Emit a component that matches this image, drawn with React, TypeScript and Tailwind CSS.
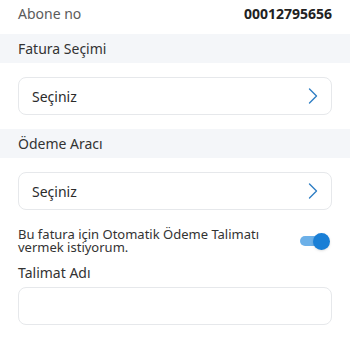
import { ChevronRight } from "lucide-react";

const SelectCard = ({ label }: { label: string }) => (
  <div className="px-[18px] py-[14px]">
    <div className="flex items-center justify-between h-[38px] pl-[13px] pr-[4px] rounded-[8px] border border-[#e6e8eb] bg-white">
      <span className="text-[14px] text-[#2b2b2b]">{label}</span>
      <ChevronRight className="w-[28px] h-[28px] text-[#2f7fc4]" strokeWidth={1.2} />
    </div>
  </div>
);

const SectionTitle = ({ title }: { title: string }) => (
  <div className="h-[29px] flex items-center px-[18px] bg-[#f4f6f9]">
    <span className="text-[14px] text-[#333]">{title}</span>
  </div>
);

export default function App() {
  return (
    <div className="w-[350px] h-[350px] bg-white overflow-hidden" style={{ fontFamily: '"Noto Sans", sans-serif' }}>
      <div className="h-[34px] flex items-center justify-between px-[18px] pb-[8px]">
        <span className="text-[14px] text-[#5b5b5b]">Abone no</span>
        <span className="text-[14px] font-bold text-[#222]">00012795656</span>
      </div>

      <SectionTitle title="Fatura Seçimi" />
      <SelectCard label="Seçiniz" />

      <SectionTitle title="Ödeme Aracı" />
      <SelectCard label="Seçiniz" />

      <div className="flex items-center justify-between px-[18px] pt-[4px]">
        <p className="text-[13px] leading-[13px] text-[#333] w-[260px]">
          Bu fatura için Otomatik Ödeme Talimatı vermek istiyorum.
        </p>
        <div className="relative w-[30px] h-[17px] mr-[2px] flex items-center">
          <div className="w-[28px] h-[10px] rounded-full bg-[#6cb0e8]" />
          <div className="absolute right-0 top-0 w-[17px] h-[17px] rounded-full bg-[#1a7fd6] shadow-sm" />
        </div>
      </div>

      <div className="px-[18px] pt-[11px]">
        <div className="text-[14px] leading-[16px] text-[#333]">Talimat Adı</div>
        <div className="mt-[6px] h-[38px] rounded-[8px] border border-[#e6e8eb] bg-white" />
      </div>
    </div>
  );
}
